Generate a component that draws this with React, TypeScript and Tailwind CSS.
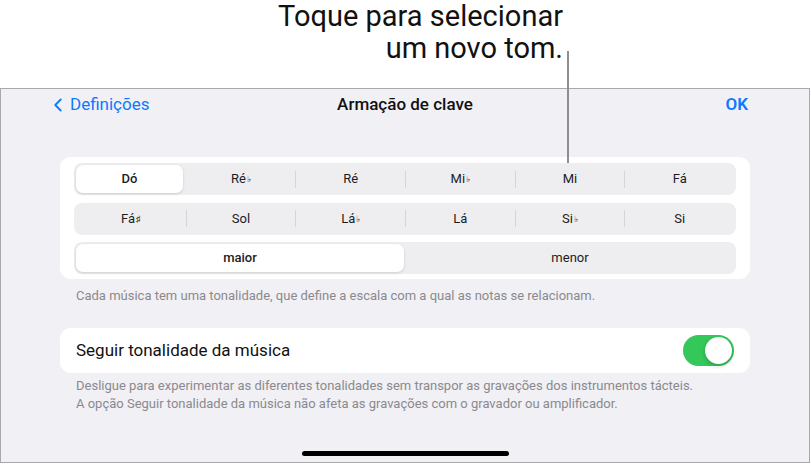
import { ChevronLeft } from 'lucide-react'

const FONT = { fontFamily: 'Roboto, "Liberation Sans", sans-serif' }

type Key = { name: string; accidental?: string }

const ROW_ONE: Key[] = [
  { name: 'Dó' },
  { name: 'Ré', accidental: '♭' },
  { name: 'Ré' },
  { name: 'Mi', accidental: '♭' },
  { name: 'Mi' },
  { name: 'Fá' },
]

const ROW_TWO: Key[] = [
  { name: 'Fá', accidental: '♯' },
  { name: 'Sol' },
  { name: 'Lá', accidental: '♭' },
  { name: 'Lá' },
  { name: 'Si', accidental: '♭' },
  { name: 'Si' },
]

function KeyLabel({ k }: { k: Key }) {
  return (
    <span>
      {k.name}
      {k.accidental && <span className="relative -top-[1px] ml-[1px] text-[9px]">{k.accidental}</span>}
    </span>
  )
}

function KeyRow({ keys, selected }: { keys: Key[]; selected?: number }) {
  return (
    <div className="flex h-[32px] items-center rounded-[8px] bg-[#eeeef0] px-[2px]">
      {keys.map((k, i) => {
        const isSel = i === selected
        const prevSel = i - 1 === selected
        return (
          <div key={k.name + (k.accidental ?? '')} className="flex h-full flex-1 items-center">
            {i > 0 && (
              <div className={`h-[17px] w-px ${isSel || prevSel ? 'bg-transparent' : 'bg-[#d5d5d9]'}`} />
            )}
            <div
              className={`flex h-[28px] flex-1 items-center justify-center text-[13px] text-[#1c1c1e] ${
                isSel ? 'mr-[3px] rounded-[7px] bg-white font-medium shadow-[0_1px_3px_rgba(0,0,0,0.14)]' : ''
              }`}
            >
              <KeyLabel k={k} />
            </div>
          </div>
        )
      })}
    </div>
  )
}

export default function App() {
  return (
    <div className="relative flex h-[466px] w-[811px] flex-col bg-white" style={FONT}>
      {/* callout */}
      <div className="h-[88px] pr-[248px] text-right text-[29px] leading-[32px] text-[#111]">
        <div>Toque para selecionar</div>
        <div>um novo tom.</div>
      </div>
      <div className="absolute left-[567px] top-[51px] h-[112px] w-[2px] bg-[#8e8e92]" />

      {/* device screen */}
      <div className="flex h-[375px] w-[810px] flex-col border border-[#a9a9ab] bg-[#f1f0f5]">
        <div className="relative flex h-[31px] items-center justify-between pl-[51px] pr-[61px] text-[17px]">
          <div className="flex items-center text-[#0a7aff]">
            <ChevronLeft size={22} strokeWidth={2} className="-ml-[5px] mr-[1px]" />
            <span>Definições</span>
          </div>
          <div className="absolute left-0 right-0 text-center font-medium text-[#111]">Armação de clave</div>
          <div className="font-semibold text-[#0a7aff]">OK</div>
        </div>

        <div className="mt-[37px] px-[59px]">
          <div className="flex flex-col gap-[7.5px] rounded-[11px] bg-white px-[14px] pb-[5px] pt-[6px]">
            <KeyRow keys={ROW_ONE} selected={0} />
            <KeyRow keys={ROW_TWO} />
            <div className="flex h-[32px] items-center rounded-[8px] bg-[#eeeef0] px-[2px] text-[13px] text-[#1c1c1e]">
              <div className="mr-[2px] flex h-[28px] flex-1 items-center justify-center rounded-[7px] bg-white font-medium shadow-[0_1px_3px_rgba(0,0,0,0.14)]">
                maior
              </div>
              <div className="flex h-[28px] flex-1 items-center justify-center">menor</div>
            </div>
          </div>
          <p className="mt-[9px] px-[16px] text-[13px] leading-[16px] text-[#8a8a8e]">
            Cada música tem uma tonalidade, que define a escala com a qual as notas se relacionam.
          </p>

          <div className="mt-[24px] flex h-[45px] items-center justify-between rounded-[11px] bg-white pl-[16px] pr-[16px]">
            <span className="text-[17px] text-[#111]">Seguir tonalidade da música</span>
            <div className="flex h-[31px] w-[51px] items-center justify-end rounded-full bg-[#34c759] p-[2px]">
              <div className="h-[27px] w-[27px] rounded-full bg-white shadow-[0_2px_4px_rgba(0,0,0,0.2)]" />
            </div>
          </div>
          <p className="mt-[4px] px-[16px] text-[13px] leading-[18px] text-[#8a8a8e]">
            Desligue para experimentar as diferentes tonalidades sem transpor as gravações dos instrumentos tácteis.
            <br />
            A opção Seguir tonalidade da música não afeta as gravações com o gravador ou amplificador.
          </p>
        </div>

        <div className="mt-auto mb-[6px] flex justify-center">
          <div className="h-[5px] w-[207px] rounded-full bg-black" />
        </div>
      </div>
    </div>
  )
}
